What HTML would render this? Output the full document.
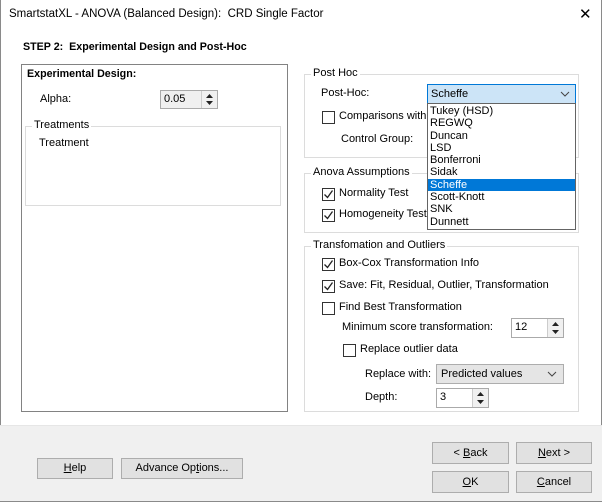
<!DOCTYPE html>
<html><head><meta charset="utf-8"><style>
*{box-sizing:border-box;margin:0;padding:0}
body{width:602px;height:502px;background:#fff;font-family:"Liberation Sans",sans-serif;font-size:11px;color:#000;position:relative;overflow:hidden}
.a{position:absolute;white-space:nowrap}
.win{position:absolute;left:0;top:0;width:602px;height:502px;border:1px solid #8a8a8a;border-top:none}
.gb{position:absolute;border:1px solid #dcdcdc}
.gl{position:absolute;background:#fff;padding:0 2px;top:-8px;left:6px}
.cb{position:absolute;width:13px;height:13px;border:1px solid #333;background:#fff}
.btn{position:absolute;background:#e1e1e1;border:1px solid #adadad;text-align:center;line-height:22px}
.inp{position:absolute;border:1px solid #7a7a7a;background:#fff;padding-left:3px;line-height:16px}
.spin{position:absolute;right:0;top:0;width:16px;height:100%;background:#f0f0f0;border-left:1px solid #ccc}
u{text-decoration:underline}
</style></head><body>
<div class="win"></div>
<div class="a" style="left:9px;top:8px;font-size:11.5px">SmartstatXL - ANOVA (Balanced Design):&nbsp; CRD Single Factor</div>
<div class="a" style="left:579px;top:5px;font-size:15px">✕</div>
<div class="a" style="left:0;top:425px;width:602px;height:76px;background:#f0f0f0;border-top:1px solid #e6e6e6"></div>
<div class="a" style="left:23px;top:41px;font-weight:bold;font-size:10.7px">STEP 2:&nbsp; Experimental Design and Post-Hoc</div>

<div class="a" style="left:21px;top:64px;width:267px;height:348px;border:1px solid #828282"></div>
<div class="a" style="left:27px;top:68px;font-weight:bold;font-size:10.7px">Experimental Design:</div>
<div class="a" style="left:40px;top:93px">Alpha:</div>
<div class="inp" style="left:160px;top:90px;width:58px;height:19px;background:#f0f0f0;border-color:#aaa">0.05<div class="spin"><svg width="15" height="17"><path d="M4 7l3.5-4 3.5 4z M4 10l3.5 4 3.5-4z" fill="#222"/></svg></div></div>
<div class="gb" style="left:25px;top:126px;width:256px;height:80px"><span class="gl" style="left:6px;top:-8px">Treatments</span></div>
<div class="a" style="left:39px;top:137px">Treatment</div>

<div class="gb" style="left:304px;top:74px;width:275px;height:84px"><span class="gl">Post Hoc</span></div>
<div class="a" style="left:321px;top:87px">Post-Hoc:</div>
<div class="cb" style="left:322px;top:111px"></div>
<div class="a" style="left:339px;top:110px">Comparisons with C</div>
<div class="a" style="left:341px;top:133px">Control Group:</div>

<div class="gb" style="left:304px;top:173px;width:275px;height:60px"><span class="gl">Anova Assumptions</span></div>
<div class="cb" style="left:322px;top:188px"><svg width="11" height="11"><path d="M1.5 5.5l3 3 5-7" stroke="#222" stroke-width="1.3" fill="none"/></svg></div>
<div class="a" style="left:339px;top:187px">Normality Test</div>
<div class="cb" style="left:322px;top:209px"><svg width="11" height="11"><path d="M1.5 5.5l3 3 5-7" stroke="#222" stroke-width="1.3" fill="none"/></svg></div>
<div class="a" style="left:339px;top:208px">Homogeneity Test</div>

<div class="a" style="left:427px;top:84px;width:149px;height:20px;background:#cce4f7;border:1px solid #0078d7;line-height:18px;padding-left:3px">Scheffe<svg class="a" style="right:5px;top:6px" width="10" height="6"><path d="M1 1l4 4 4-4" stroke="#444" fill="none"/></svg></div>
<div class="a" style="left:427px;top:103px;width:149px;height:127px;background:#fff;border:1px solid #646464;padding-top:1px;line-height:12.3px">
<div style="padding-left:2px">Tukey (HSD)</div><div style="padding-left:2px">REGWQ</div><div style="padding-left:2px">Duncan</div><div style="padding-left:2px">LSD</div><div style="padding-left:2px">Bonferroni</div><div style="padding-left:2px">Sidak</div><div style="padding-left:2px;background:#0078d7;color:#fff">Scheffe</div><div style="padding-left:2px">Scott-Knott</div><div style="padding-left:2px">SNK</div><div style="padding-left:2px">Dunnett</div></div>

<div class="gb" style="left:304px;top:246px;width:275px;height:166px"><span class="gl">Transfomation and Outliers</span></div>
<div class="cb" style="left:322px;top:258px"><svg width="11" height="11"><path d="M1.5 5.5l3 3 5-7" stroke="#222" stroke-width="1.3" fill="none"/></svg></div>
<div class="a" style="left:339px;top:257px">Box-Cox Transformation Info</div>
<div class="cb" style="left:322px;top:280px"><svg width="11" height="11"><path d="M1.5 5.5l3 3 5-7" stroke="#222" stroke-width="1.3" fill="none"/></svg></div>
<div class="a" style="left:339px;top:279px">Save: Fit, Residual, Outlier, Transformation</div>
<div class="cb" style="left:322px;top:302px"></div>
<div class="a" style="left:339px;top:301px">Find Best Transformation</div>
<div class="a" style="left:342px;top:321px">Minimum score transformation:</div>
<div class="inp" style="left:511px;top:318px;width:53px;height:20px;border-color:#aaa">12<div class="spin"><svg width="15" height="18"><path d="M4 7l3.5-4 3.5 4z M4 11l3.5 4 3.5-4z" fill="#222"/></svg></div></div>
<div class="cb" style="left:343px;top:344px"></div>
<div class="a" style="left:360px;top:343px">Replace outlier data</div>
<div class="a" style="left:365px;top:368px">Replace with:</div>
<div class="a" style="left:436px;top:364px;width:128px;height:20px;background:#e5e5e5;border:1px solid #adadad;line-height:18px;padding-left:4px">Predicted values<svg class="a" style="right:6px;top:6px" width="10" height="6"><path d="M1 1l4 4 4-4" stroke="#444" fill="none"/></svg></div>
<div class="a" style="left:365px;top:391px">Depth:</div>
<div class="inp" style="left:436px;top:388px;width:53px;height:20px;border-color:#aaa">3<div class="spin"><svg width="15" height="18"><path d="M4 7l3.5-4 3.5 4z M4 11l3.5 4 3.5-4z" fill="#222"/></svg></div></div>

<div class="btn" style="left:37px;top:458px;width:76px;height:21px;line-height:19px"><u>H</u>elp</div>
<div class="btn" style="left:121px;top:458px;width:122px;height:21px;line-height:19px">Advance Op<u>t</u>ions...</div>
<div class="btn" style="left:432px;top:442px;width:77px;height:22px;line-height:20px">&lt; <u>B</u>ack</div>
<div class="btn" style="left:516px;top:442px;width:76px;height:22px;line-height:20px"><u>N</u>ext &gt;</div>
<div class="btn" style="left:432px;top:471px;width:77px;height:22px;line-height:20px"><u>O</u>K</div>
<div class="btn" style="left:516px;top:471px;width:76px;height:22px;line-height:20px"><u>C</u>ancel</div>
</body></html>
